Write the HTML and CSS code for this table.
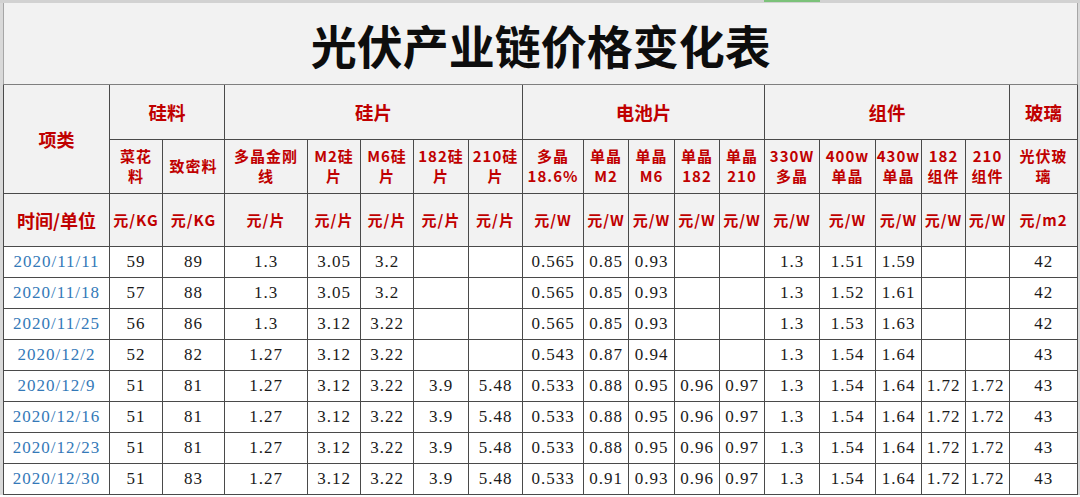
FILE: index.html
```html
<!DOCTYPE html>
<html lang="zh-CN">
<head>
<meta charset="utf-8">
<title>光伏产业链价格变化表</title>
<link rel="stylesheet" href="styles.css">
</head>
<body>
<div class="topbar"><div class="sel"></div></div>
<div class="sheet">
<table class="grid">
<colgroup>
<col class="w106"><col class="w53"><col class="w62"><col class="w83"><col class="w53"><col class="w53"><col class="w55"><col class="w54"><col class="w61"><col class="w45"><col class="w46"><col class="w45"><col class="w45"><col class="w55"><col class="w56"><col class="w46"><col class="w44"><col class="w44"><col class="w68">
</colgroup>
<tbody>
<tr class="r-title"><td class="title" colspan="19">光伏产业链价格变化表</td></tr>
<tr class="r-group">
<td class="head big" rowspan="2">项类</td>
<td class="head group" colspan="2">硅料</td>
<td class="head group" colspan="5">硅片</td>
<td class="head group" colspan="5">电池片</td>
<td class="head group" colspan="5">组件</td>
<td class="head group">玻璃</td>
</tr>
<tr class="r-sub">
<td class="head sub">菜花<br>料</td>
<td class="head sub">致密料</td>
<td class="head sub">多晶金刚<br>线</td>
<td class="head sub">M2硅<br>片</td>
<td class="head sub">M6硅<br>片</td>
<td class="head sub">182硅<br>片</td>
<td class="head sub">210硅<br>片</td>
<td class="head sub">多晶<br>18.6%</td>
<td class="head sub">单晶<br>M2</td>
<td class="head sub">单晶<br>M6</td>
<td class="head sub">单晶<br>182</td>
<td class="head sub">单晶<br>210</td>
<td class="head sub">330W<br>多晶</td>
<td class="head sub">400w<br>单晶</td>
<td class="head sub">430w<br>单晶</td>
<td class="head sub">182<br>组件</td>
<td class="head sub">210<br>组件</td>
<td class="head sub">光伏玻<br>璃</td>
</tr>
<tr class="r-unit">
<td class="head big">时间/单位</td>
<td class="head unit">元/KG</td><td class="head unit">元/KG</td>
<td class="head unit">元/片</td><td class="head unit">元/片</td><td class="head unit">元/片</td><td class="head unit">元/片</td><td class="head unit">元/片</td>
<td class="head unit">元/W</td><td class="head unit">元/W</td><td class="head unit">元/W</td><td class="head unit">元/W</td><td class="head unit">元/W</td>
<td class="head unit">元/W</td><td class="head unit">元/W</td><td class="head unit">元/W</td><td class="head unit">元/W</td><td class="head unit">元/W</td>
<td class="head unit">元/m2</td>
</tr>
<tr class="r-data"><td class="date">2020/11/11</td><td>59</td><td>89</td><td>1.3</td><td>3.05</td><td>3.2</td><td></td><td></td><td>0.565</td><td>0.85</td><td>0.93</td><td></td><td></td><td>1.3</td><td>1.51</td><td>1.59</td><td></td><td></td><td>42</td></tr>
<tr class="r-data"><td class="date">2020/11/18</td><td>57</td><td>88</td><td>1.3</td><td>3.05</td><td>3.2</td><td></td><td></td><td>0.565</td><td>0.85</td><td>0.93</td><td></td><td></td><td>1.3</td><td>1.52</td><td>1.61</td><td></td><td></td><td>42</td></tr>
<tr class="r-data"><td class="date">2020/11/25</td><td>56</td><td>86</td><td>1.3</td><td>3.12</td><td>3.22</td><td></td><td></td><td>0.565</td><td>0.85</td><td>0.93</td><td></td><td></td><td>1.3</td><td>1.53</td><td>1.63</td><td></td><td></td><td>42</td></tr>
<tr class="r-data"><td class="date">2020/12/2</td><td>52</td><td>82</td><td>1.27</td><td>3.12</td><td>3.22</td><td></td><td></td><td>0.543</td><td>0.87</td><td>0.94</td><td></td><td></td><td>1.3</td><td>1.54</td><td>1.64</td><td></td><td></td><td>43</td></tr>
<tr class="r-data"><td class="date">2020/12/9</td><td>51</td><td>81</td><td>1.27</td><td>3.12</td><td>3.22</td><td>3.9</td><td>5.48</td><td>0.533</td><td>0.88</td><td>0.95</td><td>0.96</td><td>0.97</td><td>1.3</td><td>1.54</td><td>1.64</td><td>1.72</td><td>1.72</td><td>43</td></tr>
<tr class="r-data"><td class="date">2020/12/16</td><td>51</td><td>81</td><td>1.27</td><td>3.12</td><td>3.22</td><td>3.9</td><td>5.48</td><td>0.533</td><td>0.88</td><td>0.95</td><td>0.96</td><td>0.97</td><td>1.3</td><td>1.54</td><td>1.64</td><td>1.72</td><td>1.72</td><td>43</td></tr>
<tr class="r-data"><td class="date">2020/12/23</td><td>51</td><td>81</td><td>1.27</td><td>3.12</td><td>3.22</td><td>3.9</td><td>5.48</td><td>0.533</td><td>0.88</td><td>0.95</td><td>0.96</td><td>0.97</td><td>1.3</td><td>1.54</td><td>1.64</td><td>1.72</td><td>1.72</td><td>43</td></tr>
<tr class="r-data"><td class="date">2020/12/30</td><td>51</td><td>83</td><td>1.27</td><td>3.12</td><td>3.22</td><td>3.9</td><td>5.48</td><td>0.533</td><td>0.91</td><td>0.93</td><td>0.96</td><td>0.97</td><td>1.3</td><td>1.54</td><td>1.64</td><td>1.72</td><td>1.72</td><td>43</td></tr>
</tbody>
</table>
</div>
</body>
</html>
```

FILE: styles.css
```css
html, body {
  margin: 0;
  padding: 0;
}
body {
  background: #ffffff;
  font-family: "Noto Sans CJK SC", sans-serif;
}
.topbar {
  height: 3px;
  display: flex;
  background: #d2d2d2;
}
.topbar .sel {
  margin-left: 764px;
  width: 56px;
  height: 2px;
  background: #7cc27a;
}
.sheet {
  padding: 0 3px;
  background: #d9d9d9;
}
.grid {
  border-collapse: collapse;
  table-layout: fixed;
  width: 1074px;
}
.w106 { width: 106px; }
.w53 { width: 53px; }
.w62 { width: 62px; }
.w83 { width: 83px; }
.w55 { width: 55px; }
.w54 { width: 54px; }
.w61 { width: 61px; }
.w45 { width: 45px; }
.w46 { width: 46px; }
.w56 { width: 56px; }
.w44 { width: 44px; }
.w68 { width: 68px; }

.grid td {
  border: 1px solid #4a4a4a;
  padding: 0;
  text-align: center;
  vertical-align: middle;
  white-space: nowrap;
  overflow: hidden;
  background: #ffffff;
  color: #1a1a1a;
  font-family: "Liberation Serif", "Noto Sans CJK SC", serif;
  font-size: 17px;
  letter-spacing: 1px;
  line-height: 20px;
}
.r-title { height: 81px; }
.r-group { height: 55px; }
.r-sub { height: 54px; }
.r-unit { height: 53px; }
.r-data { height: 31px; }

.grid td.title {
  background: #f2f2f2;
  color: #0d0d0d;
  font-family: "Noto Sans CJK SC", sans-serif;
  font-weight: 700;
  font-size: 46px;
  letter-spacing: 0;
  line-height: 52px;
  padding-top: 2px;
  border-top: none;
  border-left: 1px solid #a6a6a6;
  border-right: 1px solid #a6a6a6;
  border-bottom: 1px solid #7f7f7f;
}
.grid td.head {
  background: #f2f2f2;
  color: #c00000;
  font-family: "Noto Sans CJK SC", sans-serif;
}
.grid td.big {
  font-size: 18px;
  font-weight: 700;
  letter-spacing: 0;
}
.grid td.group {
  font-size: 18.5px;
  font-weight: 700;
  letter-spacing: 0;
}
.grid td.sub {
  font-size: 15px;
  font-weight: 700;
  letter-spacing: 1px;
  line-height: 20px;
}
.grid td.unit {
  font-size: 15px;
  font-weight: 700;
  letter-spacing: 1px;
}
.grid td.date {
  color: #3479b8;
}
```
